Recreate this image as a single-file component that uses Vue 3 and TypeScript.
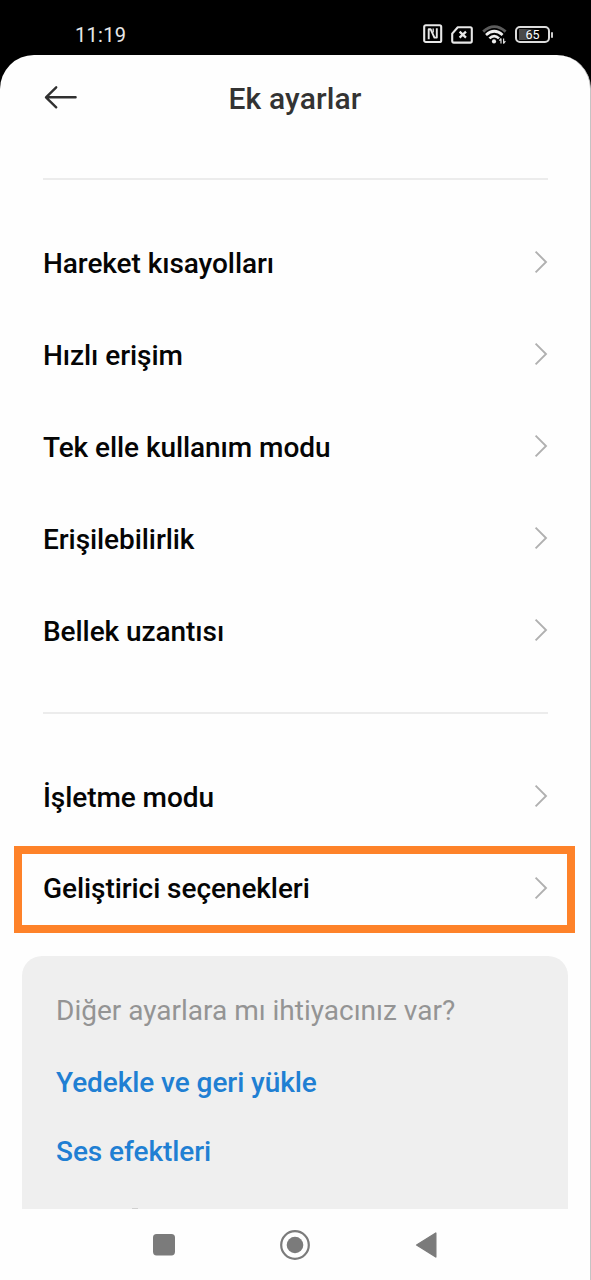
<script setup lang="ts">
interface Row {
  label: string
  highlighted?: boolean
}

const gestureRows: Row[] = [
  { label: 'Hareket kısayolları' },
  { label: 'Hızlı erişim' },
  { label: 'Tek elle kullanım modu' },
  { label: 'Erişilebilirlik' },
  { label: 'Bellek uzantısı' },
]

const systemRows: Row[] = [
  { label: 'İşletme modu' },
  { label: 'Geliştirici seçenekleri', highlighted: true },
]

const groups: Row[][] = [gestureRows, systemRows]
const links: string[] = ['Yedekle ve geri yükle', 'Ses efektleri']
</script>

<template>
  <div class="phone">
    <header class="status">
      <span class="time">11:19</span>
      <div class="indicators">
        <svg class="nfc" width="20" height="20" viewBox="0 0 20 20" fill="none" stroke="#e8e8e8">
          <rect x="1.2" y="1.2" width="17" height="16.8" rx="1.6" stroke-width="2.1" />
          <path d="M5.7 15.2V5.2H7.6L11.4 13.6H13.8V4.2" stroke-width="1.9" stroke-linejoin="round" />
          <path d="M10.2 4.6V8.4" stroke-width="1.3" />
        </svg>
        <svg class="sim" width="22" height="18" viewBox="0 0 22 18" fill="none" stroke="#e8e8e8">
          <path d="M6.8 1.2H19.2Q20.8 1.2 20.8 2.8V15Q20.8 16.6 19.2 16.6H2.8Q1.2 16.6 1.2 15V7.6Z" stroke-width="2.1" stroke-linejoin="round" />
          <path d="M8.6 5.6L15 11.6M15 5.6L8.6 11.6" stroke-width="2.3" />
        </svg>
        <svg class="wifi" width="25" height="20" viewBox="0 0 25 20" fill="none">
          <path d="M1.2 6.6Q12.2 -3.4 23.6 6.6" stroke="#5c5c5c" stroke-width="2.8" />
          <path d="M4 9.9Q12.2 2.6 20.6 9.9" stroke="#eee" stroke-width="2.7" />
          <path d="M7.4 13.4Q12.2 8.8 17 13.4" stroke="#eee" stroke-width="2.7" />
          <circle cx="12" cy="16.4" r="2.1" fill="#eee" />
          <path d="M19 13.4V18.6M19.2 13.4L17.4 15.6M21.6 18.6V13.4M21.4 18.6L23.4 16.2" stroke="#ddd" stroke-width="1.2" />
        </svg>
        <div class="battery">
          <div class="cell"><span>65</span></div>
          <i class="nub"></i>
        </div>
      </div>
    </header>

    <main class="sheet">
      <div class="titlebar">
        <svg class="back" width="34" height="24" viewBox="0 0 34 24" fill="none" stroke="#303030" stroke-width="2.4" stroke-linecap="round" stroke-linejoin="round">
          <path d="M32.6 12.3H3.2M13.2 2.3L3 12.3L13.2 22.3" />
        </svg>
        <h1>Ek ayarlar</h1>
      </div>

      <section v-for="(group, index) in groups" :key="index" class="group">
        <div v-for="row in group" :key="row.label" class="row" :class="{ highlighted: row.highlighted }">
          <span>{{ row.label }}</span>
          <svg width="14" height="24" viewBox="0 0 14 24" fill="none" stroke="#b0b0b0" stroke-width="1.9">
            <path d="M1.6 1.6L12 12L1.6 22.4" />
          </svg>
        </div>
      </section>

      <section class="card">
        <p>Diğer ayarlara mı ihtiyacınız var?</p>
        <a v-for="link in links" :key="link">{{ link }}</a>
        <i class="peek"></i>
      </section>

      <nav class="navbar">
        <svg width="22" height="22" viewBox="0 0 22 22"><rect width="22" height="21.4" rx="3.6" fill="#7b7b7b" /></svg>
        <svg width="30" height="30" viewBox="0 0 30 30">
          <circle cx="15" cy="15" r="13.8" fill="none" stroke="#7b7b7b" stroke-width="2.2" />
          <circle cx="15" cy="15" r="8.3" fill="#7b7b7b" />
        </svg>
        <svg width="22" height="26" viewBox="0 0 22 26"><path d="M1.6 13L20.8 1V25Z" fill="#7b7b7b" stroke="#7b7b7b" stroke-width="1.4" stroke-linejoin="round" /></svg>
      </nav>
    </main>
  </div>
</template>

<style>
body {
  margin: 0;
  background: #000;
}
</style>

<style scoped>
.phone {
  width: 591px;
  height: 1280px;
  display: flex;
  flex-direction: column;
  overflow: hidden;
  background: #000;
  font-family: Roboto, "Liberation Sans", sans-serif;
}
.status {
  height: 55px;
  flex: none;
  box-sizing: border-box;
  display: flex;
  justify-content: space-between;
  align-items: flex-start;
  padding: 23px 38px 0 75px;
  color: #e8e8e8;
}
.time {
  font-size: 20px;
  line-height: 24px;
  font-weight: 400;
  letter-spacing: 0.3px;
}
.indicators {
  display: flex;
  align-items: flex-start;
}
.nfc {
  margin: 1px 8px 0 0;
}
.sim {
  margin: 3px 9px 0 0;
}
.wifi {
  margin: 2px 8px 0 0;
}
.battery {
  display: flex;
  align-items: center;
  gap: 1px;
  padding-top: 3px;
}
.cell {
  width: 35px;
  height: 17px;
  box-sizing: border-box;
  border: 2px solid #dcdcdc;
  border-radius: 5px;
  background: linear-gradient(90deg, #4a4a4a 0 6px, #303030 10px, #000 18px) 2px 1px / 26px 11px no-repeat;
  display: flex;
  justify-content: center;
  align-items: center;
  font-size: 12.5px;
  line-height: 13px;
  font-weight: 400;
  color: #fff;
}
.nub {
  width: 2px;
  height: 6px;
  border-radius: 1px;
  background: #ccc;
}
.sheet {
  flex: 1;
  min-height: 0;
  box-sizing: border-box;
  display: flex;
  flex-direction: column;
  background: #fefefe;
  border-right: 1px solid #c4c4c4;
  border-radius: 34px 34px 0 0;
}
.titlebar {
  height: 123px;
  flex: none;
  display: grid;
  grid-template-columns: 44px 1fr 44px;
  align-items: start;
  padding: 0 43px;
}
.back {
  margin-top: 30px;
}
h1 {
  margin: 25px 0 0;
  text-align: center;
  font-size: 30px;
  line-height: 38px;
  font-weight: 500;
  letter-spacing: 0.15px;
  color: #333;
}
.group {
  flex: none;
  margin: 0 42px 0 43px;
  padding: 37px 0 35px;
  border-top: 2px solid #ececec;
}
.group + .group {
  padding-bottom: 21px;
}
.row {
  height: 92px;
  display: flex;
  align-items: center;
  justify-content: space-between;
  font-size: 28px;
  font-weight: 500;
  letter-spacing: -0.07px;
  color: #050505;
}
.row svg {
  margin-top: -2px;
}
.highlighted {
  height: 69px;
  margin: 3px -27px 2px -29px;
  padding: 0 19px 2px 21px;
  border: 8px solid #fe8229;
}
.card {
  height: 253px;
  flex: none;
  box-sizing: border-box;
  margin: 0 22px;
  padding: 36px 34px 0;
  border-radius: 20px 20px 0 0;
  background: #efefef;
  display: flex;
  flex-direction: column;
}
.card p {
  margin: 0 0 34px;
  font-size: 28px;
  line-height: 38px;
  color: #949494;
}
.card a {
  margin-bottom: 31px;
  font-size: 28px;
  line-height: 38px;
  font-weight: 500;
  letter-spacing: -0.07px;
  color: #207fd3;
}
.peek {
  width: 6px;
  height: 1px;
  margin: auto 0 0 76px;
  background: #d0d0d0;
}
.navbar {
  flex: 1;
  display: grid;
  grid-template-columns: repeat(3, 131px);
  justify-content: center;
  place-items: center;
}
</style>
